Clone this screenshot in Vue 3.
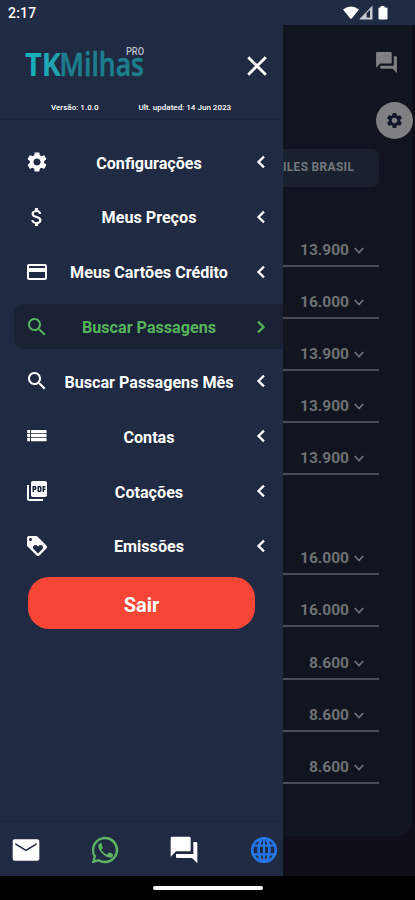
<script setup>
const icons = {
  settings: 'M19.14 12.94c.04-.3.06-.61.06-.94 0-.32-.02-.64-.07-.94l2.03-1.58c.18-.14.23-.41.12-.61l-1.92-3.32c-.12-.22-.37-.29-.59-.22l-2.39.96c-.5-.38-1.03-.7-1.62-.94l-.36-2.54c-.04-.24-.24-.41-.48-.41h-3.84c-.24 0-.43.17-.47.41l-.36 2.54c-.59.24-1.13.57-1.62.94l-2.39-.96c-.22-.08-.47 0-.59.22L2.74 8.87c-.12.21-.08.47.12.61l2.03 1.58c-.05.3-.09.63-.09.94s.02.64.07.94l-2.03 1.58c-.18.14-.23.41-.12.61l1.92 3.32c.12.22.37.29.59.22l2.39-.96c.5.38 1.03.7 1.62.94l.36 2.54c.05.24.24.41.48.41h3.84c.24 0 .44-.17.47-.41l.36-2.54c.59-.24 1.13-.56 1.62-.94l2.39.96c.22.08.47 0 .59-.22l1.92-3.32c.12-.22.07-.47-.12-.61l-2.01-1.58zM12 15.6c-1.98 0-3.6-1.62-3.6-3.6s1.62-3.6 3.6-3.6 3.6 1.62 3.6 3.6-1.62 3.6-3.6 3.6z',
  money: 'M11.8 10.9c-2.27-.59-3-1.2-3-2.15 0-1.09 1.01-1.85 2.7-1.85 1.78 0 2.44.85 2.5 2.1h2.21c-.07-1.72-1.12-3.3-3.21-3.81V3h-3v2.16c-1.94.42-3.5 1.68-3.5 3.61 0 2.31 1.91 3.46 4.7 4.13 2.5.6 3 1.48 3 2.41 0 .69-.49 1.79-2.7 1.79-2.06 0-2.87-.92-2.98-2.1h-2.2c.12 2.19 1.76 3.42 3.68 3.83V21h3v-2.15c1.95-.37 3.5-1.5 3.5-3.55 0-2.84-2.43-3.81-4.7-4.4z',
  card: 'M20 4H4c-1.11 0-1.99.89-1.99 2L2 18c0 1.11.89 2 2 2h16c1.11 0 2-.89 2-2V6c0-1.11-.89-2-2-2zm0 14H4v-6h16v6zm0-10H4V6h16v2z',
  search: 'M15.5 14h-.79l-.28-.27C15.41 12.59 16 11.11 16 9.5 16 5.91 13.09 3 9.5 3S3 5.91 3 9.5 5.91 16 9.5 16c1.61 0 3.09-.59 4.23-1.57l.27.28v.79l5 4.99L20.49 19l-4.99-5zm-6 0C7.01 14 5 11.99 5 9.5S7.01 5 9.5 5 14 7.01 14 9.5 11.99 14 9.5 14z',
  list: 'M2.200 6h2.900v3.200H2.200zM6 6H21.500v3.200H6zM2.200 10h2.900v3.200H2.200zM6 10H21.500v3.200H6zM2.200 14h2.900v3.200H2.200zM6 14H21.500v3.200H6z',
  pdf: 'M20 2H8c-1.1 0-2 .9-2 2v12c0 1.1.9 2 2 2h12c1.1 0 2-.9 2-2V4c0-1.1-.9-2-2-2zm-8.5 7.5c0 .83-.67 1.5-1.5 1.5H9v2H7.5V7H10c.83 0 1.5.67 1.5 1.5v1zm5 2c0 .83-.67 1.5-1.5 1.5h-2.5V7H15c.83 0 1.5.67 1.5 1.5v3zm4-3H19v1h1.5V11H19v2h-1.5V7h3v1.5zM9 9.5h1v-1H9v1zM4 6H2v14c0 1.1.9 2 2 2h14v-2H4V6zm10 5.5h1v-3h-1v3z',
  loyalty: 'M21.41 11.58l-9-9C12.05 2.22 11.55 2 11 2H4c-1.1 0-2 .9-2 2v7c0 .55.22 1.05.59 1.42l9 9c.36.36.86.58 1.41.58s1.05-.22 1.41-.59l7-7c.37-.36.59-.86.59-1.41s-.23-1.06-.59-1.42zM5.5 7C4.67 7 4 6.33 4 5.5S4.67 4 5.5 4 7 4.67 7 5.5 6.33 7 5.5 7zm11.77 8.27L13 19.54l-4.27-4.27C8.28 14.81 8 14.19 8 13.5c0-1.38 1.12-2.5 2.5-2.5.69 0 1.32.28 1.77.74l.73.72.73-.73c.45-.45 1.08-.73 1.77-.73 1.38 0 2.5 1.12 2.5 2.5 0 .69-.28 1.32-.73 1.77z',
  forum: 'M21 6h-2v9H6v2c0 .55.45 1 1 1h11l4 4V7c0-.55-.45-1-1-1zm-4 6V3c0-.55-.45-1-1-1H3c-.55 0-1 .45-1 1v14l4-4h10c.55 0 1-.45 1-1z',
  mail: 'M20.500 4H3.500c-.9 0-1.490.7-1.490 1.500L2 18.500c0 .8.600 1.500 1.500 1.500h17c.8 0 1.500-.7 1.500-1.500V5.500c0-.8-.7-1.500-1.500-1.500zM20 8l-8 5-8-5V6.700l8 5 8-5z',
}
const menu = [
  { icon: 'settings', label: 'Configurações' },
  { icon: 'money', label: 'Meus Preços' },
  { icon: 'card', label: 'Meus Cartões Crédito' },
  { icon: 'search', label: 'Buscar Passagens', active: true },
  { icon: 'search', label: 'Buscar Passagens Mês' },
  { icon: 'list', label: 'Contas' },
  { icon: 'pdf', label: 'Cotações' },
  { icon: 'loyalty', label: 'Emissões' },
]
const groups = [
  ['13.900', '16.000', '13.900', '13.900', '13.900'],
  ['16.000', '16.000', '8.600', '8.600', '8.600'],
]
</script>

<template>
  <div class="screen">
    <header class="status">
      <span class="time">2:17</span>
      <svg class="signals" width="48" height="16" viewBox="0 0 48 16">
        <path d="M0 4.500Q8 -1.500 16 4.500L8.700 13.500Q8 14.300 7.300 13.500Z" fill="#fff" />
        <path d="M16 14.500L29.500 .5V14.500Z" fill="#c9cbd0" />
        <path d="M23.600 12.500V8.300L27 4.800V12.500Z" fill="#1d2740" />
        <path d="M37.500 1h4v1.500h2q1 0 1 1V13.500q0 1-1 1h-7q-1 0-1-1V3.500q0-1 1-1h1z" fill="#fff" />
      </svg>
    </header>

    <div class="body">
      <aside class="drawer">
        <div class="head">
          <svg class="logo" width="128" height="54" viewBox="0 -10 128 54">
            <defs>
              <linearGradient id="tk" x1="0" y1="0" x2="1" y2="0">
                <stop offset="0" stop-color="#13b4c0" />
                <stop offset="1" stop-color="#22a0ae" />
              </linearGradient>
            </defs>
            <text class="tk" x="0" y="32" textLength="36" lengthAdjust="spacingAndGlyphs" fill="url(#tk)">TK</text>
            <text class="milhas" x="34.500" y="32" textLength="84.500" lengthAdjust="spacingAndGlyphs">Milhas</text>
            <text class="pro" x="101" y="10.500" textLength="18" lengthAdjust="spacingAndGlyphs">PRO</text>
          </svg>
          <svg class="close" width="20" height="20" viewBox="0 0 20 20">
            <path d="M1.200 1.200L18.800 18.800M18.800 1.200L1.200 18.800" stroke="#fff" stroke-width="2.800" />
          </svg>
        </div>
        <div class="version">
          <span>Versão: 1.0.0</span>
          <span>Ult. updated: 14 Jun 2023</span>
        </div>

        <nav class="menu">
          <div v-for="m in menu" :key="m.label" class="item" :class="{ active: m.active }">
            <svg class="icon" viewBox="0 0 24 24"><path :d="icons[m.icon]" /></svg>
            <span class="label">{{ m.label }}</span>
            <svg class="arrow" viewBox="0 0 10 14">
              <path :d="m.active ? 'M2 1.700L7.500 7L2 12.300' : 'M8 1.700L2.500 7L8 12.300'" />
            </svg>
          </div>
        </nav>
        <button class="logout">Sair</button>

        <footer class="links">
          <svg class="link" viewBox="0 0 24 24"><path :d="icons.mail" fill="#fff" /></svg>
          <svg class="link" viewBox="0 0 32 32" fill="#5cb362">
            <path d="M2.800 29.200L4.600 22.500A13.200 13.200 0 1 1 9.500 27.400ZM6.100 25.900L9.900 24.900A10.700 10.700 0 1 0 7.100 22.100Z" fill-rule="evenodd" />
            <path d="M12.200 9.300c-.4-.8-.8-.8-1.300-.8-.7 0-2.500 1-2.500 3.500s1.800 4.900 2.100 5.200c.3.400 3.500 5.400 8.600 7.400 4.200 1.600 5.100.6 6-1 .4-.8.600-2 .4-2.200-.2-.3-3.700-2-4.200-2.100-.4-.2-.7 0-1 .3l-1.400 1.700c-.3.400-.6.400-1.100.2-3.500-1.600-5-3.800-5.700-5-.3-.5 0-.8.200-1l1-1.200c.3-.4.200-.7.100-1z" transform="translate(2 1.700) scale(.87)" />
          </svg>
          <svg class="link" viewBox="0 0 24 24"><path :d="icons.forum" fill="#fff" /></svg>
          <svg class="link" viewBox="0 0 32 32" fill="none" stroke="#2377e8" stroke-width="2.600">
            <circle cx="16" cy="16" r="11.800" />
            <ellipse cx="16" cy="16" rx="5.500" ry="11.800" />
            <path d="M16 4V28M5 11.700H27M5 20.300H27" stroke-width="2.300" />
          </svg>
        </footer>
      </aside>

      <main class="page">
        <div class="panel">
          <div class="top">
            <svg class="chat" viewBox="0 0 24 24"><path :d="icons.forum" /></svg>
          </div>
          <div class="gear">
            <svg viewBox="0 0 24 24"><path :d="icons.settings" /></svg>
          </div>
          <div class="chip">ILES BRASIL</div>
          <div v-for="(g, gi) in groups" :key="gi" class="group">
            <div v-for="(v, i) in g" :key="i" class="price">
              <span>{{ v }}</span>
              <svg viewBox="0 0 10 7"><path d="M.7 1L5 5.500L9.300 1" /></svg>
            </div>
          </div>
        </div>
      </main>
    </div>

    <div class="gesture"><i></i></div>
  </div>
</template>

<style>
body { background: #000; }
</style>
<style scoped>
* { box-sizing: border-box; }
.screen { width: 415px; height: 900px; display: flex; flex-direction: column; overflow: hidden; background: #000; color: #fff; font-family: Roboto, sans-serif; }
svg { display: block; flex: none; }
.status { height: 25px; flex: none; display: flex; justify-content: space-between; align-items: center; background: #202b44; padding: 0 24px 0 8px; }
.time { font-size: 14px; font-weight: 500; letter-spacing: .2px; padding-top: 1px; }
.body { flex: 1; display: flex; min-height: 0; }
.drawer { width: 283px; flex: none; display: flex; flex-direction: column; background: #202a42; }
.head { height: 74px; display: flex; justify-content: space-between; align-items: flex-start; padding: 9px 16px 0 25px; }
.tk { font: 700 33px "Open Sans", sans-serif; }
.milhas { font: 600 32px "Open Sans", sans-serif; fill: #1b7f8e; stroke: #1b7f8e; stroke-width: .6px; }
.pro { font: 500 10.500px Roboto, sans-serif; fill: #b9bec9; }
.close { margin-top: 22px; }
.version { height: 21px; display: flex; gap: 40px; padding: 2px 0 0 51px; font-size: 8.050px; line-height: 13px; font-weight: 500; border-bottom: 1px solid #1b2438; white-space: nowrap; }
.menu { padding-top: 19.500px; display: flex; flex-direction: column; gap: 9.850px; padding-left: 14px; }
.item { height: 45px; flex: none; display: flex; align-items: center; padding: 0 17.500px 0 11px; border-radius: 10px 0 0 10px; }
.icon { width: 24px; height: 24px; fill: #fff; }
.label { flex: 1; text-align: center; font-size: 16.150px; font-weight: 700; white-space: nowrap; margin: 2px -5px 0 -11.500px; }
.arrow { width: 10px; height: 14px; }
.arrow path { fill: none; stroke: #fff; stroke-width: 2.300; }
.active { background: #1a2135; color: #55b45a; }
.active .icon { fill: #55b45a; }
.active .arrow path { stroke: #55b45a; }
.logout { width: 227px; height: 52px; flex: none; margin: 9px 0 0 28px; border: 0; border-radius: 21px; background: #f74536; color: #fff; font: 700 20px Roboto, sans-serif; padding: 3px 0 0; }
.links { margin-top: auto; height: 55px; border-top: 1px solid #1b273a; display: flex; justify-content: space-between; align-items: center; padding: 2px 3px 0 10px; }
.link { width: 32px; height: 32px; }
.link:nth-child(2), .link:nth-child(3) { margin-left: -1px; }
.page { flex: 1; background: #0d0e17; }
.panel { width: 129px; height: 811px; background: #10151f; border-radius: 0 0 14px 0; display: flex; flex-direction: column; }
.top { height: 77px; flex: none; padding: 25px 13px 0 0; display: flex; justify-content: flex-end; }
.chat { width: 25px; height: 25px; fill: #7f8083; }
.gear { width: 37px; height: 37px; flex: none; border-radius: 50%; background: #7f8083; align-self: flex-end; margin-right: -1px; display: flex; align-items: center; justify-content: center; }
.gear svg { width: 19px; height: 19px; fill: #10172b; }
.chip { width: 96px; height: 38px; flex: none; margin-top: 10px; border-radius: 0 7px 7px 0; background: #18212d; color: #74787e; font-size: 12px; font-weight: 700; line-height: 37px; letter-spacing: .3px; white-space: nowrap; }
.group { padding-top: 27.500px; }
.group + .group { padding-top: 48px; }
.price { width: 96px; height: 52.150px; border-bottom: 2px solid #4b4e54; color: #6f7175; display: flex; align-items: flex-end; justify-content: flex-end; gap: 5px; padding: 0 15px 6px 0; font-size: 15.500px; line-height: 18px; font-weight: 700; }
.price svg { width: 10px; height: 7px; margin-bottom: 5px; }
.price path { fill: none; stroke: #74767a; stroke-width: 1.700; }
.gesture { height: 24px; flex: none; display: flex; justify-content: center; align-items: center; }
.gesture i { width: 110px; height: 4px; border-radius: 2px; background: #fff; }
</style>
